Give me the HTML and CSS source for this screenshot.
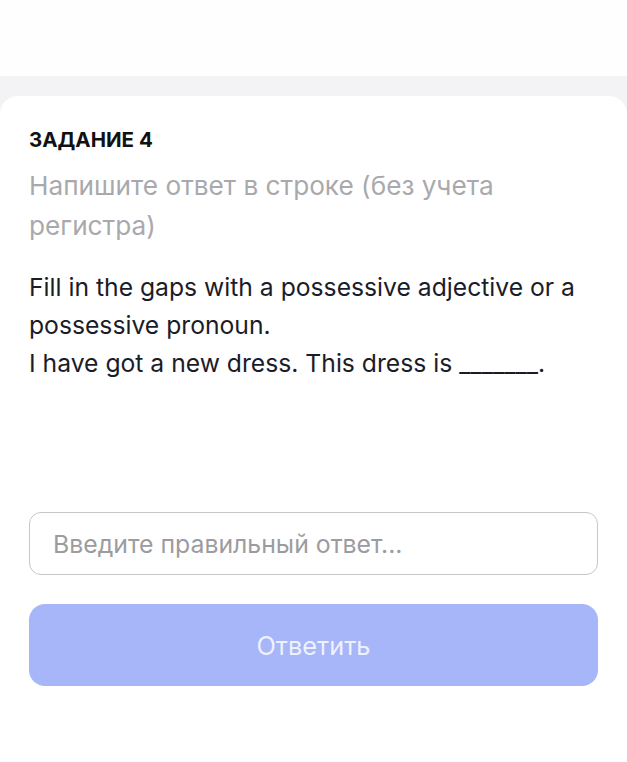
FILE: index.html
```html
<!DOCTYPE html>
<html lang="ru">
<head>
<meta charset="utf-8">
<link rel="stylesheet" href="styles.css">
</head>
<body>
<div class="top"></div>
<div class="band">
  <div class="card">
    <div class="title">ЗАДАНИЕ 4</div>
    <div class="hint">Напишите ответ в строке (без учета регистра)</div>
    <div class="question">Fill in the gaps with a possessive adjective or a possessive pronoun.<br>I have got a new dress. This dress is _______.</div>
    <div class="spacer"></div>
    <div class="input">Введите правильный ответ...</div>
    <div class="button">Ответить</div>
  </div>
</div>
</body>
</html>
```
FILE: styles.css
```css
html, body {
  margin: 0;
  padding: 0;
  background: #ffffff;
  width: 627px;
  height: 762px;
  overflow: hidden;
}
.top {
  height: 76px;
  background: #fefefe;
}
.band {
  background: #f3f3f6;
  padding-top: 20px;
  height: 666px;
}
.card {
  background: #ffffff;
  border-radius: 18px 18px 0 0;
  height: 100%;
  padding: 32px 29px 0 29px;
  box-sizing: border-box;
  display: flex;
  flex-direction: column;
}
.title {
  font-family: Inter, sans-serif;
  font-weight: 700;
  font-size: 20.5px;
  line-height: 24px;
  color: #111111;
}
.hint {
  font-family: Inter, sans-serif;
  font-size: 26.2px;
  line-height: 40px;
  color: #a9a9ad;
  margin-top: 14px;
  width: 520px;
}
.question {
  font-family: Inter, sans-serif;
  font-size: 24.7px;
  line-height: 38px;
  color: #1c1c28;
  margin-top: 22px;
}
.question-blank {
  letter-spacing: 0;
}
.spacer {
  height: 130px;
}
.input {
  height: 63px;
  border: 1.5px solid #c6c6ca;
  border-radius: 12px;
  box-sizing: border-box;
  padding-left: 23px;
  display: flex;
  align-items: center;
  font-family: Inter, sans-serif;
  font-size: 24.8px;
  color: #9c9ca0;
}
.button {
  margin-top: 29px;
  height: 82px;
  border-radius: 16px;
  background: #a6b6f8;
  display: flex;
  align-items: center;
  justify-content: center;
  font-family: Inter, sans-serif;
  font-size: 25.3px;
  color: #eef1ff;
}
```
